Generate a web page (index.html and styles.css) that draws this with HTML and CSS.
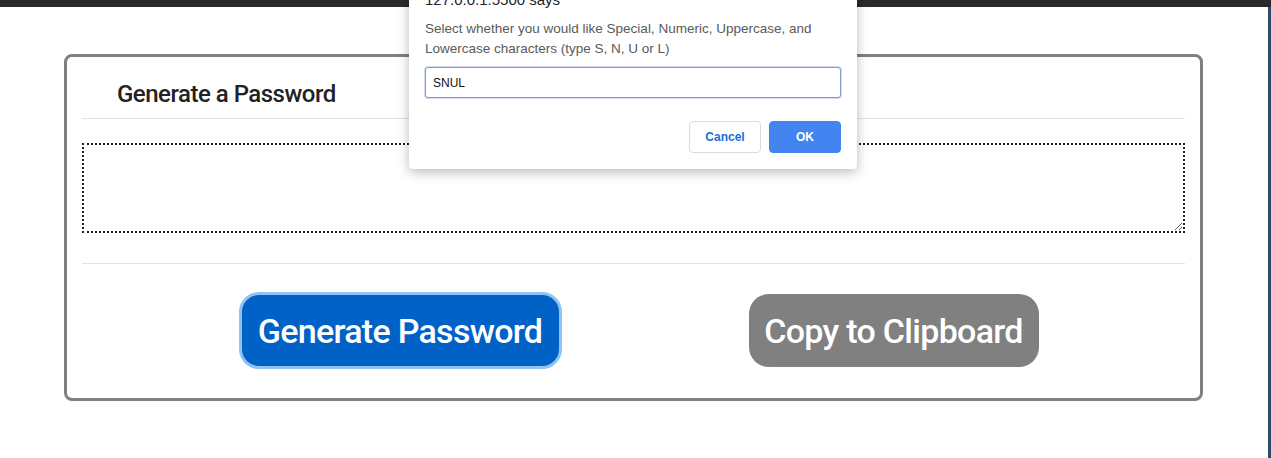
FILE: index.html
```html
<!DOCTYPE html>
<html lang="en">
<head>
<meta charset="utf-8">
<title>Password Generator</title>
<link rel="stylesheet" href="styles.css">
</head>
<body>
<div class="topbar"></div>
<div class="page">
  <main class="main">
    <div class="card">
      <div class="card-header">
        <h2 class="title">Generate a Password</h2>
      </div>
      <div class="card-body">
        <textarea class="password" readonly></textarea>
      </div>
      <div class="card-footer">
        <button class="btn btn-generate">Generate Password</button>
        <button class="btn btn-copy">Copy to Clipboard</button>
      </div>
    </div>
  </main>
  <div class="edge"></div>
</div>

<div class="dialog">
  <div class="dialog-title">127.0.0.1:5500 says</div>
  <div class="dialog-msg">Select whether you would like Special, Numeric, Uppercase, and Lowercase characters (type S, N, U or L)</div>
  <input class="dialog-input" type="text" value="SNUL">
  <div class="dialog-actions">
    <button class="dbtn dbtn-cancel">Cancel</button>
    <button class="dbtn dbtn-ok">OK</button>
  </div>
</div>
</body>
</html>
```

FILE: styles.css
```css
html, body {
  margin: 0;
  padding: 0;
  background: #ffffff;
  height: 100%;
  overflow: hidden;
}

body {
  font-family: Roboto, "Liberation Sans", sans-serif;
  position: relative;
}

.topbar {
  height: 7px;
  background: #2a2a2a;
}

.page {
  display: flex;
  height: 451px;
}

.main {
  flex: 1;
  padding-top: 47px;
  padding-left: 64px;
}

.edge {
  width: 3px;
  background: #2e4a66;
}

.card {
  width: 1139px;
  box-sizing: border-box;
  border: 3px solid #808080;
  border-radius: 8px;
  padding: 0 15px;
}

.card-header {
  border-bottom: 1px solid #e3e3e3;
  height: 61px;
  display: flex;
  align-items: flex-end;
  padding-left: 35px;
}

.title {
  margin: 0 0 10px 0;
  font-family: Roboto, "Liberation Sans", sans-serif;
  font-weight: 500;
  font-size: 24px;
  letter-spacing: -0.5px;
  color: #222222;
}

.card-body {
  padding: 24px 0 30px;
  border-bottom: 1px solid #e3e3e3;
}

.password {
  display: block;
  width: 100%;
  box-sizing: border-box;
  height: 90px;
  border: 2px dotted #222222;
  resize: vertical;
  outline: none;
  margin: 0;
}

.card-footer {
  display: flex;
  justify-content: center;
  align-items: center;
  gap: 187px;
  padding: 28px 0 29px 10px;
}

.btn {
  font-family: Roboto, "Liberation Sans", sans-serif;
  font-size: 34px;
  font-weight: 500;
  letter-spacing: -0.7px;
  color: #ffffff;
  border-radius: 20px;
  cursor: pointer;
  padding: 0;
}

.btn-generate {
  background: #0062c6;
  border: 3px solid #8fc3f2;
  width: 323px;
  height: 77px;
}

.btn-copy {
  background: #808080;
  border: none;
  width: 290px;
  height: 73px;
}

.dialog {
  position: absolute;
  top: -25px;
  left: 409px;
  width: 448px;
  box-sizing: border-box;
  padding: 16px;
  background: #ffffff;
  border-radius: 0 0 4px 4px;
  box-shadow: 0 3px 12px rgba(0, 0, 0, 0.28);
  font-family: "Liberation Sans", Arial, sans-serif;
}

.dialog-title {
  font-size: 15px;
  line-height: 17px;
  color: #222222;
}

.dialog-msg {
  margin-top: 11px;
  font-size: 13.5px;
  line-height: 20px;
  color: #5a5a5a;
}

.dialog-input {
  display: block;
  width: 100%;
  box-sizing: border-box;
  height: 31px;
  margin-top: 8px;
  padding: 0 7px;
  border: 1px solid #7e9fcc;
  border-radius: 3px;
  box-shadow: 0 0 0 1px rgba(126, 159, 204, 0.35);
  font-family: "Liberation Sans", Arial, sans-serif;
  font-size: 12px;
  color: #111111;
  outline: none;
}

.dialog-actions {
  display: flex;
  justify-content: flex-end;
  gap: 8px;
  margin-top: 23px;
}

.dbtn {
  width: 72px;
  height: 32px;
  border-radius: 4px;
  font-family: "Liberation Sans", Arial, sans-serif;
  font-size: 12px;
  font-weight: bold;
  cursor: pointer;
}

.dbtn-cancel {
  background: #ffffff;
  border: 1px solid #dadce0;
  color: #1a6fd8;
}

.dbtn-ok {
  background: #4285f0;
  border: 1px solid #4285f0;
  color: #ffffff;
}
```
